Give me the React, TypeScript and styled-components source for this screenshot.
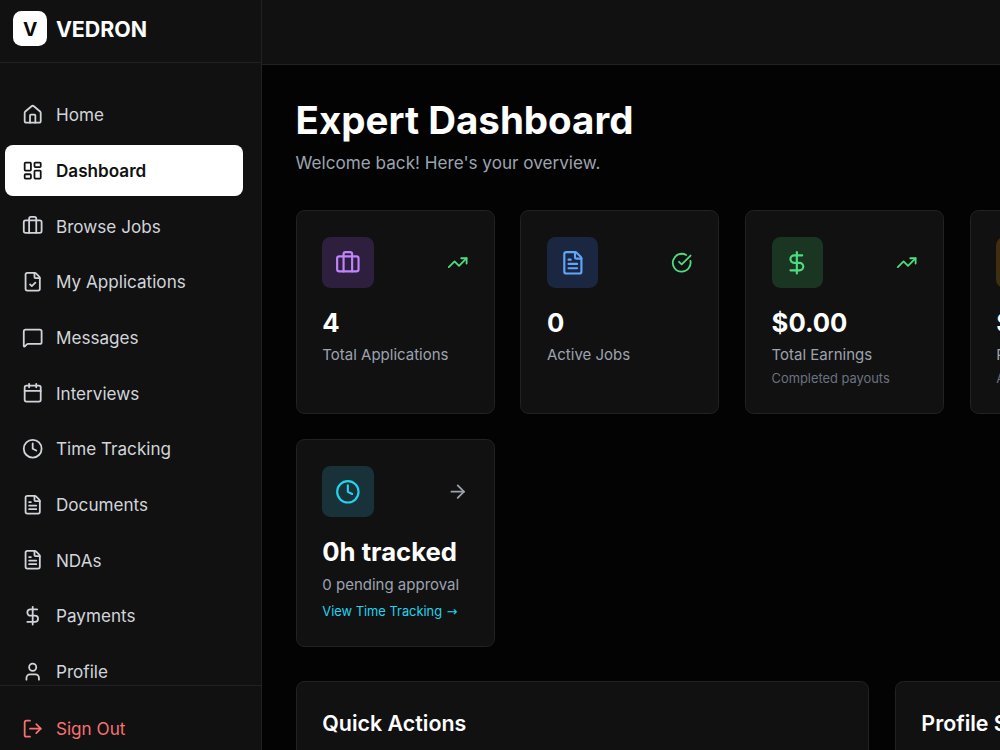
import React from "react";
import styled, { createGlobalStyle } from "styled-components";
import {
  House, LayoutDashboard, Briefcase, FileCheck, MessageSquare, Calendar, Clock, FileText,
  DollarSign, User, LogOut, TrendingUp, CircleCheckBig, ArrowRight, type LucideIcon,
} from "lucide-react";

const Global = createGlobalStyle`
  * { box-sizing: border-box; }
  html, body { margin: 0; background: #030303; overflow: hidden; }
  body { font-family: Inter, "Liberation Sans", sans-serif; color: #fff; -webkit-font-smoothing: antialiased; }
  h1, h2, p { margin: 0; }
`;

const Shell = styled.div`
  display: grid;
  grid-template-columns: 261.5px 1fr;
  width: 1000px;
  height: 750px;
  overflow: hidden;
`;

const Sidebar = styled.aside`
  display: flex;
  flex-direction: column;
  min-height: 0;
  background: #111;
  border-right: 1px solid #222;
`;

const Brand = styled.div`
  display: flex;
  align-items: center;
  gap: 8.6px;
  flex: none;
  height: 63.4px;
  padding: 0 13px 5.2px;
  border-bottom: 1px solid #222;
`;

const BrandMark = styled.div`
  display: grid;
  place-items: center;
  width: 34.3px;
  height: 34.3px;
  border-radius: 8.5px;
  background: #fff;
  color: #0a0a0a;
  font-size: 19.3px;
  font-weight: 700;
`;

const BrandName = styled.span`
  font-size: 21.4px;
  font-weight: 700;
`;

const Nav = styled.nav`
  display: flex;
  flex-direction: column;
  flex: 1;
  gap: 4.3px;
  min-height: 0;
  overflow: hidden;
  padding: 25.6px 17.5px 0 4.6px;
`;

const NavItem = styled.a<{ $active?: boolean; $danger?: boolean }>`
  display: flex;
  align-items: center;
  flex: none;
  gap: 12.9px;
  height: 51.4px;
  padding: 0 17.1px;
  border-radius: 8px;
  font-size: 17.14px;
  font-weight: ${(p) => (p.$active ? 600 : 400)};
  color: ${(p) => (p.$active ? "#111" : p.$danger ? "#f87171" : "#d1d5db")};
  background: ${(p) => (p.$active ? "#fff" : "transparent")};
`;

const SidebarFooter = styled.div`
  flex: none;
  height: 65px;
  padding: 17.1px 17.5px 0 4.6px;
  border-top: 1px solid #222;
`;

const Page = styled.div`
  display: flex;
  flex-direction: column;
  min-width: 0;
  overflow: hidden;
`;

const TopBar = styled.header`
  flex: none;
  height: 65px;
  background: #111;
  border-bottom: 1px solid #222;
`;

const Main = styled.main`
  width: 941.2px;
  padding: 34px 34.1px;
`;

const Title = styled.h1`
  font-size: 38.5px;
  line-height: 42.9px;
  font-weight: 700;
`;

const Subtitle = styled.p`
  margin-top: 8.4px;
  font-size: 17.14px;
  line-height: 25.7px;
  color: #9ca3af;
`;

const Stats = styled.section`
  display: grid;
  grid-template-columns: repeat(4, 1fr);
  gap: 25.6px;
  margin-top: 34.3px;
`;

const Card = styled.article`
  padding: 25.7px;
  background: #111;
  border: 1px solid #222;
  border-radius: 8.5px;
`;

const CardTop = styled.div`
  display: flex;
  align-items: center;
  justify-content: space-between;
  margin-bottom: 17.5px;
`;

const IconTile = styled.div<{ $bg: string; $fg: string }>`
  display: grid;
  place-items: center;
  width: 51.4px;
  height: 51.4px;
  border-radius: 8.5px;
  background: ${(p) => p.$bg};
  color: ${(p) => p.$fg};
`;

const Value = styled.p`
  font-size: 25.7px;
  line-height: 34.3px;
  font-weight: 700;
  white-space: nowrap;
`;

const Label = styled.p`
  margin-top: 4.3px;
  font-size: 15px;
  line-height: 21.4px;
  color: #9ca3af;
  white-space: nowrap;
`;

const Note = styled.p`
  margin-top: 4.1px;
  font-size: 12.86px;
  line-height: 17.1px;
  color: #6b7280;
  white-space: nowrap;
`;

const CardLink = styled.a`
  display: block;
  margin-top: 8.4px;
  font-size: 12.86px;
  line-height: 17.1px;
  color: #22d3ee;
  white-space: nowrap;
`;

const LinkArrow = styled.span`
  margin-left: 1px;
  font-family: "DejaVu Sans", sans-serif;
  font-size: 12.86px;
  line-height: 1;
`;

const Panels = styled.section`
  display: grid;
  grid-template-columns: repeat(3, 1fr);
  gap: 25.6px;
  margin-top: 34.3px;
`;

const Panel = styled(Card)<{ $span?: number }>`
  grid-column: span ${(p) => p.$span ?? 1};
  height: 300px;
`;

const PanelTitle = styled.h2`
  font-size: 21.4px;
  line-height: 30.6px;
  font-weight: 600;
`;

const navItems: [string, LucideIcon][] = [
  ["Home", House],
  ["Dashboard", LayoutDashboard],
  ["Browse Jobs", Briefcase],
  ["My Applications", FileCheck],
  ["Messages", MessageSquare],
  ["Interviews", Calendar],
  ["Time Tracking", Clock],
  ["Documents", FileText],
  ["NDAs", FileText],
  ["Payments", DollarSign],
  ["Profile", User],
];

interface Stat {
  icon: LucideIcon;
  bg: string;
  fg: string;
  side: LucideIcon;
  sideColor: string;
  value: string;
  label: string;
  note?: string;
  link?: string;
}

const stats: Stat[] = [
  { icon: Briefcase, bg: "#2f1f3f", fg: "#c084fc", side: TrendingUp, sideColor: "#4ade80", value: "4", label: "Total Applications" },
  { icon: FileText, bg: "#1b2740", fg: "#60a5fa", side: CircleCheckBig, sideColor: "#4ade80", value: "0", label: "Active Jobs" },
  { icon: DollarSign, bg: "#1b3523", fg: "#4ade80", side: TrendingUp, sideColor: "#4ade80", value: "$0.00", label: "Total Earnings", note: "Completed payouts" },
  { icon: Clock, bg: "#3d2f10", fg: "#facc15", side: Clock, sideColor: "#facc15", value: "$0.00", label: "Pending Earnings", note: "Awaiting payout" },
  { icon: Clock, bg: "#19323a", fg: "#22d3ee", side: ArrowRight, sideColor: "#9ca3af", value: "0h tracked", label: "0 pending approval", link: "View Time Tracking" },
];

export default function App() {
  return (
    <>
      <Global />
      <Shell>
        <Sidebar>
          <Brand>
            <BrandMark>V</BrandMark>
            <BrandName>VEDRON</BrandName>
          </Brand>
          <Nav>
            {navItems.map(([name, Icon]) => (
              <NavItem key={name} $active={name === "Dashboard"}>
                <Icon size={21.4} />
                {name}
              </NavItem>
            ))}
          </Nav>
          <SidebarFooter>
            <NavItem $danger>
              <LogOut size={21.4} />
              Sign Out
            </NavItem>
          </SidebarFooter>
        </Sidebar>
        <Page>
          <TopBar />
          <Main>
            <Title>Expert Dashboard</Title>
            <Subtitle>Welcome back! Here's your overview.</Subtitle>
            <Stats>
              {stats.map(({ icon: Icon, side: Side, ...s }) => (
                <Card key={s.label}>
                  <CardTop>
                    <IconTile $bg={s.bg} $fg={s.fg}>
                      <Icon size={25.7} />
                    </IconTile>
                    <Side size={21.4} color={s.sideColor} />
                  </CardTop>
                  <Value>{s.value}</Value>
                  <Label>{s.label}</Label>
                  {s.note && <Note>{s.note}</Note>}
                  {s.link && (
                    <CardLink>
                      {s.link} <LinkArrow>→</LinkArrow>
                    </CardLink>
                  )}
                </Card>
              ))}
            </Stats>
            <Panels>
              <Panel $span={2}>
                <PanelTitle>Quick Actions</PanelTitle>
              </Panel>
              <Panel>
                <PanelTitle>Profile Status</PanelTitle>
              </Panel>
            </Panels>
          </Main>
        </Page>
      </Shell>
    </>
  );
}
